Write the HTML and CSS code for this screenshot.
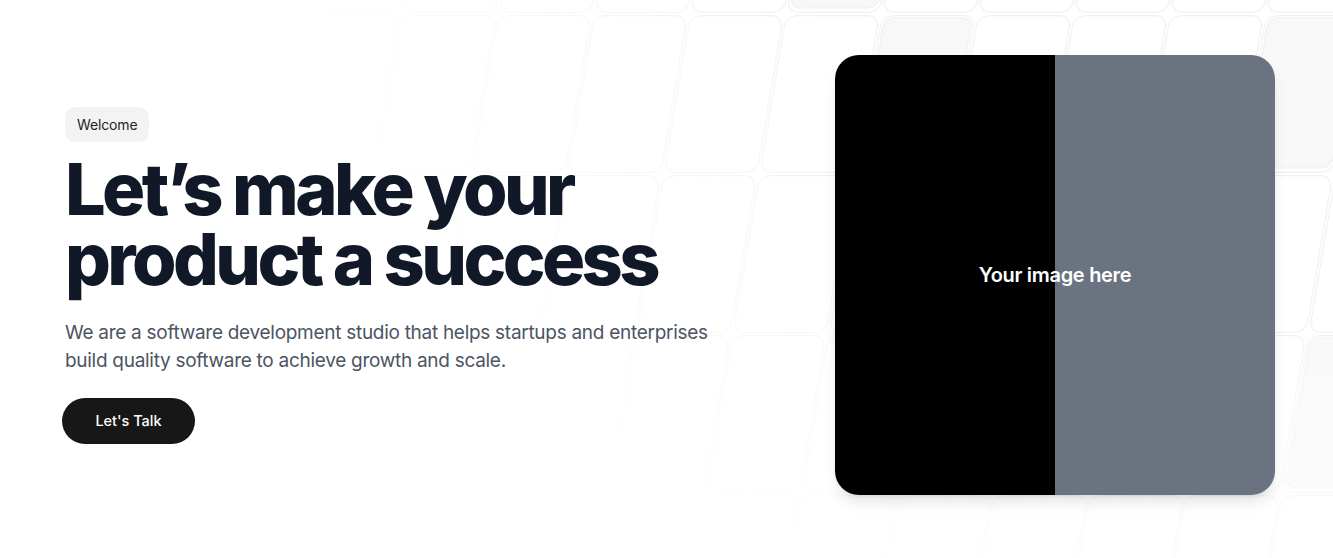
FILE: index.html
```html
<!DOCTYPE html>
<html lang="en">
<head>
<meta charset="utf-8">
<title>Hero</title>
<link rel="stylesheet" href="styles.css">
</head>
<body>
<section class="hero">
  <svg class="bg-grid" aria-hidden="true" xmlns="http://www.w3.org/2000/svg">
    <defs>
      <pattern id="cells" width="96" height="160" patternUnits="userSpaceOnUse" patternTransform="translate(17 14) skewX(-9.5)">
        <rect x="1.5" y="1.5" width="93" height="157" rx="12" fill="none" stroke="#f0f0f0" stroke-width="1.2"/>
      </pattern>
    </defs>
    <rect width="100%" height="100%" fill="url(#cells)"/>
    <g transform="translate(17 14) skewX(-9.5)" fill="#f8f8f8" stroke="#f0f0f0" stroke-width="1.2">
      <rect x="772" y="-156" width="88" height="150" rx="10"/>
      <rect x="868" y="4" width="88" height="150" rx="10"/>
      <rect x="1252" y="4" width="88" height="150" rx="10"/>
      <rect x="1348" y="324" width="88" height="150" rx="10"/>
    </g>
  </svg>

  <div class="intro">
    <span class="badge">Welcome</span>
    <h1 class="title">Let’s make your product a success</h1>
    <p class="lead">We are a software development studio that helps startups and enterprises build quality software to achieve growth and scale.</p>
    <a class="cta" href="#">Let's Talk</a>
  </div>

  <div class="media">
    <span class="media-label">Your image here</span>
  </div>
</section>
</body>
</html>
```

FILE: styles.css
```css
* {
  box-sizing: border-box;
}

html, body {
  margin: 0;
  padding: 0;
  background: #ffffff;
  overflow: hidden;
}

body {
  font-family: Inter, "Noto Sans", "Liberation Sans", sans-serif;
  color: #111827;
}

.hero {
  position: relative;
  height: 558px;
  display: flex;
  align-items: center;
  justify-content: space-between;
  padding: 55px 58px 63px 65px;
}

.bg-grid {
  position: absolute;
  inset: 0;
  width: 100%;
  height: 100%;
  z-index: 0;
  -webkit-mask-image: radial-gradient(ellipse 1050px 780px at 1333px -100px, #000 50%, transparent 100%);
  mask-image: radial-gradient(ellipse 1050px 780px at 1333px -100px, #000 50%, transparent 100%);
}

.intro {
  position: relative;
  z-index: 1;
  max-width: 672px;
  display: flex;
  flex-direction: column;
  align-items: flex-start;
}

.badge {
  display: inline-block;
  background: #f3f3f3;
  color: #1f1f1f;
  font-size: 14px;
  line-height: 20px;
  padding: 8px 12px 7px;
  border-radius: 10px;
  font-weight: 400;
  letter-spacing: -0.01em;
}

.title {
  margin: 12px 0 0;
  font-size: 72px;
  line-height: 70px;
  font-weight: 800;
  letter-spacing: -0.05em;
  color: #111827;
}

.lead {
  margin: 25px 0 0;
  font-size: 19px;
  line-height: 28px;
  letter-spacing: -0.015em;
  color: #4b5563;
  font-weight: 400;
}

.cta {
  margin: 23px 0 0 -3px;
  display: inline-flex;
  align-items: center;
  justify-content: center;
  width: 133px;
  height: 46px;
  border-radius: 999px;
  background: #171717;
  color: #ffffff;
  font-size: 14.5px;
  font-weight: 500;
  text-decoration: none;
}

.media {
  position: relative;
  z-index: 1;
  flex: none;
  width: 440px;
  height: 440px;
  border-radius: 24px;
  background: linear-gradient(to right, #000000 50%, #6b7280 50%);
  display: flex;
  align-items: center;
  justify-content: center;
  box-shadow: 0 10px 15px -3px rgba(0, 0, 0, 0.1), 0 4px 6px -4px rgba(0, 0, 0, 0.1);
}

.media-label {
  color: #ffffff;
  font-size: 20px;
  font-weight: 600;
  letter-spacing: -0.015em;
}
```
